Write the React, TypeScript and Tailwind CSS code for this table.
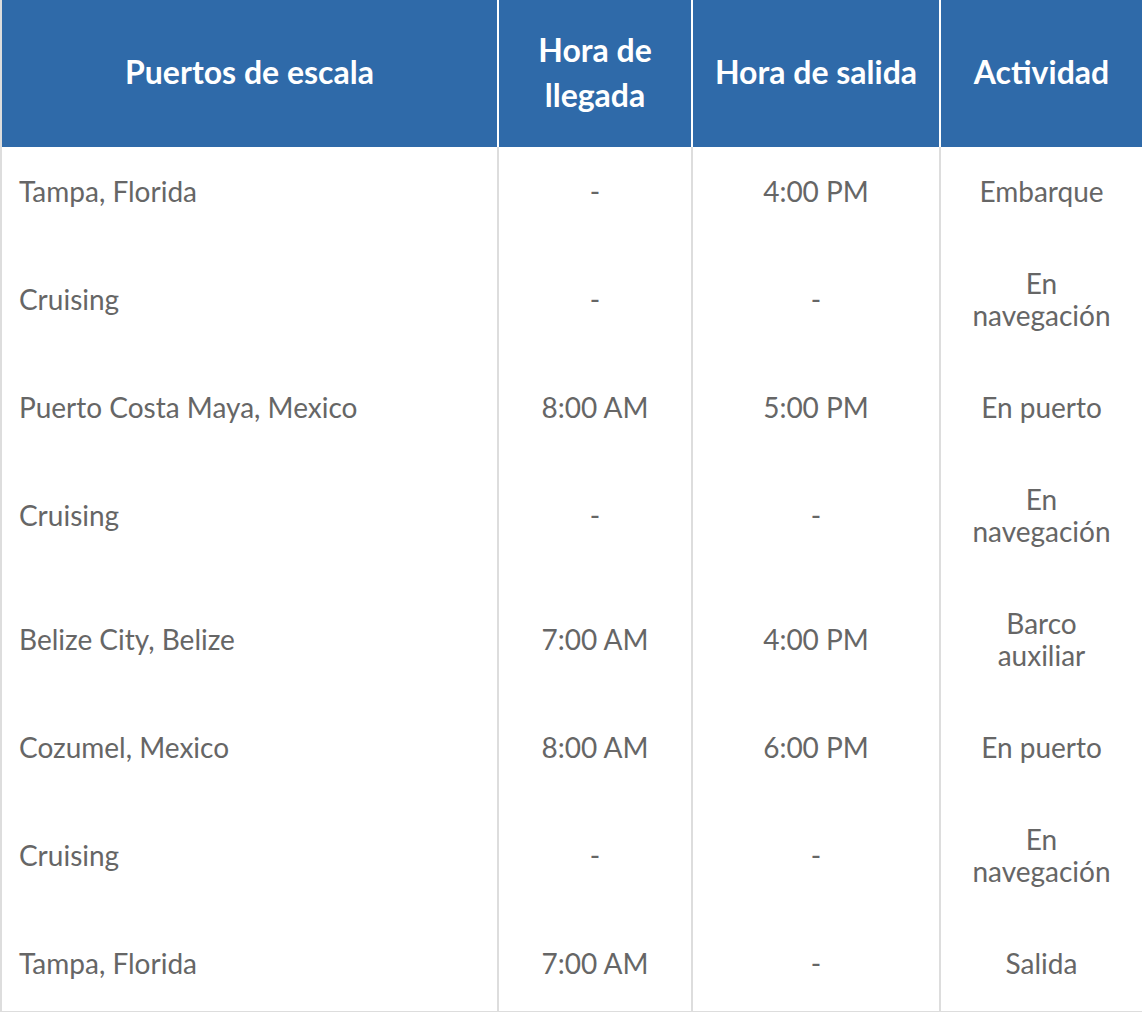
const ROWS: [string, string, string, string][] = [
  ["Tampa, Florida", "-", "4:00 PM", "Embarque"],
  ["Cruising", "-", "-", "En navegación"],
  ["Puerto Costa Maya, Mexico", "8:00 AM", "5:00 PM", "En puerto"],
  ["Cruising", "-", "-", "En navegación"],
  ["Belize City, Belize", "7:00 AM", "4:00 PM", "Barco auxiliar"],
  ["Cozumel, Mexico", "8:00 AM", "6:00 PM", "En puerto"],
  ["Cruising", "-", "-", "En navegación"],
  ["Tampa, Florida", "7:00 AM", "-", "Salida"],
];

export default function App() {
  return (
    <div className="w-[1142px] bg-white" style={{ fontFamily: "Lato, 'Open Sans', sans-serif" }}>
      <table className="w-[1142px] table-fixed border-collapse border-l-2 border-r-2 border-b-2 border-[#dddddd]">
        <colgroup>
          <col className="w-[497px]" />
          <col className="w-[194px]" />
          <col className="w-[248px]" />
          <col className="w-[203px]" />
        </colgroup>
        <thead>
          <tr className="bg-[#2f6aa9] text-white text-[32px] font-bold leading-[45px]">
            <th className="h-[147px] px-3 pb-1 text-center align-middle border-r-2 border-white">Puertos de escala</th>
            <th className="h-[147px] px-3 pb-1 text-center align-middle border-r-2 border-white">Hora de llegada</th>
            <th className="h-[147px] px-1 pb-1 text-center align-middle border-r-2 border-white">Hora de salida</th>
            <th className="h-[147px] px-1 pb-1 text-center align-middle">Actividad</th>
          </tr>
        </thead>
        <tbody className="text-[28px] leading-[32px] text-[#666666]">
          {ROWS.map((r, i) => (
            <tr key={i}>
              <td className="pt-[28px] pb-[32px] pl-[17px] pr-4 text-left align-middle border-r-2 border-[#dddddd]">{r[0]}</td>
              <td className="pt-[28px] pb-[32px] px-3 text-center align-middle border-r-2 border-[#dddddd]">{r[1]}</td>
              <td className="pt-[28px] pb-[32px] px-3 text-center align-middle border-r-2 border-[#dddddd]">{r[2]}</td>
              <td className="pt-[28px] pb-[32px] px-[30px] text-center align-middle">{r[3]}</td>
            </tr>
          ))}
        </tbody>
      </table>
    </div>
  );
}
